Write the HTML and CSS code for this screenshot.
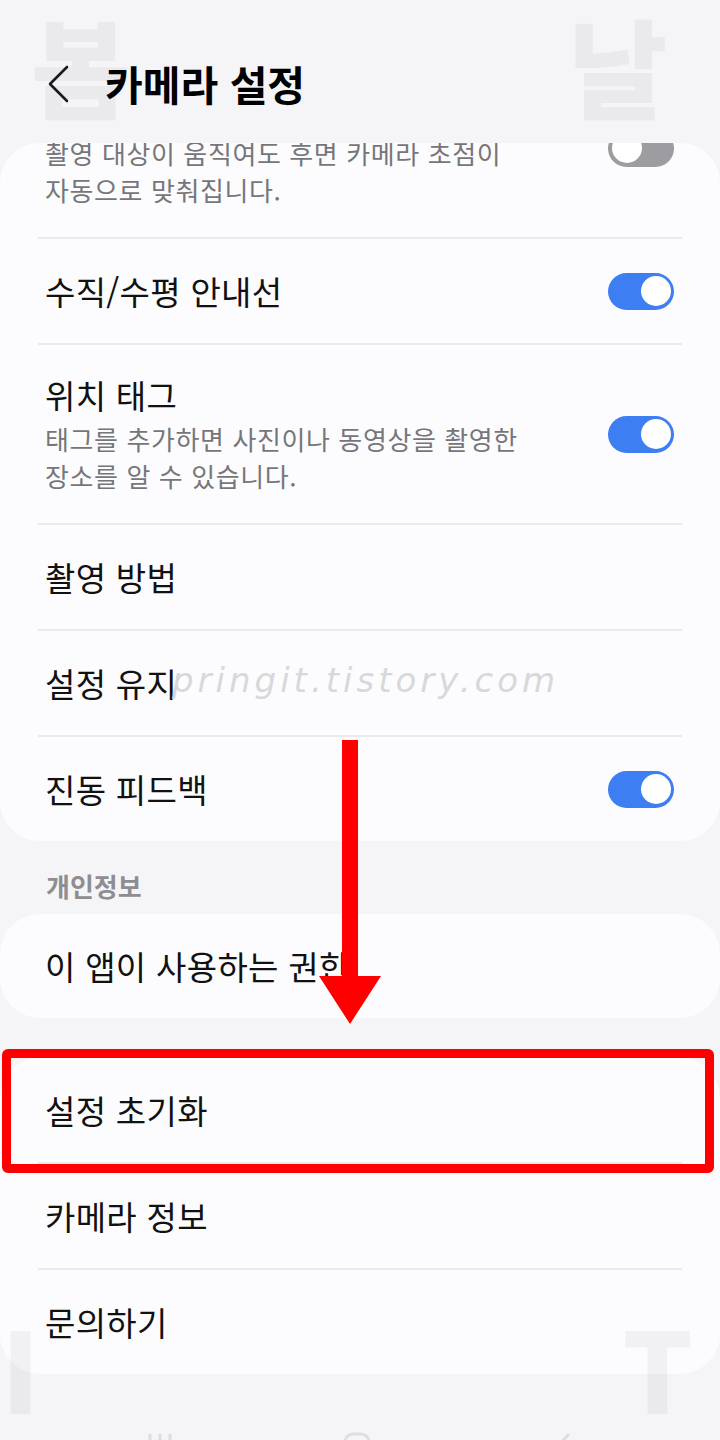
FILE: index.html
```html
<!DOCTYPE html>
<html lang="ko">
<head>
<meta charset="utf-8">
<title>카메라 설정</title>
<link rel="stylesheet" href="styles.css">
</head>
<body>
<div class="screen">
  <header class="header">
    <svg class="back" viewBox="0 0 24 38"><path d="M21 2 L4 19 L21 36"/></svg>
    <h1 class="title">카메라 설정</h1>
  </header>

  <div class="clip">
    <section class="card card-first">
      <div class="row row-2">
        <div class="text">
          <div class="label">추적 AF</div>
          <div class="desc">촬영 대상이 움직여도 후면 카메라 초점이 자동으로 맞춰집니다.</div>
        </div>
        <span class="toggle off"><span class="knob"></span></span>
      </div>
      <div class="divider"></div>
      <div class="row">
        <div class="text"><div class="label">수직/수평 안내선</div></div>
        <span class="toggle"><span class="knob"></span></span>
      </div>
      <div class="divider"></div>
      <div class="row row-2">
        <div class="text">
          <div class="label">위치 태그</div>
          <div class="desc">태그를 추가하면 사진이나 동영상을 촬영한 장소를 알 수 있습니다.</div>
        </div>
        <span class="toggle"><span class="knob"></span></span>
      </div>
      <div class="divider"></div>
      <div class="row">
        <div class="text"><div class="label">촬영 방법</div></div>
      </div>
      <div class="divider"></div>
      <div class="row">
        <div class="text"><div class="label">설정 유지</div></div>
      </div>
      <div class="divider"></div>
      <div class="row">
        <div class="text"><div class="label">진동 피드백</div></div>
        <span class="toggle"><span class="knob"></span></span>
      </div>
    </section>
  </div>

  <div class="section-title">개인정보</div>
  <section class="card">
    <div class="row">
      <div class="text"><div class="label">이 앱이 사용하는 권한</div></div>
    </div>
  </section>

  <section class="card card-gap">
    <div class="row">
      <div class="text"><div class="label">설정 초기화</div></div>
    </div>
    <div class="divider"></div>
    <div class="row">
      <div class="text"><div class="label">카메라 정보</div></div>
    </div>
    <div class="divider"></div>
    <div class="row">
      <div class="text"><div class="label">문의하기</div></div>
    </div>
  </section>

  <nav class="navbar">
    <svg class="nav-icon" viewBox="0 0 30 30"><path d="M5 2 V28 M15 2 V28 M25 2 V28"/></svg>
    <svg class="nav-icon nav-home" viewBox="0 0 30 30"><rect x="3" y="2" width="24" height="24" rx="8"/></svg>
    <svg class="nav-icon nav-back" viewBox="0 0 30 30"><path d="M20 2 L9 14 L20 26"/></svg>
  </nav>

  <div class="watermark">pringit.tistory.com</div>
  <div class="highlight"></div>
  <svg class="arrow" viewBox="0 0 72 290"><rect x="27" y="2" width="16" height="240"/><polygon points="4,238 66,238 35,286"/></svg>

  <div class="wm wm-bom">봄</div>
  <div class="wm wm-nal">날</div>
  <div class="wm wm-i">I</div>
  <div class="wm wm-t">T</div>
</div>
</body>
</html>
```

FILE: styles.css
```css
html, body {
  margin: 0;
  padding: 0;
}

body {
  background: #f5f5f7;
  font-family: "Noto Sans CJK KR", "Noto Sans", sans-serif;
  color: #111;
}

.screen {
  position: relative;
  width: 720px;
  height: 1440px;
  overflow: hidden;
}

/* Header */
.header {
  height: 143px;
  box-sizing: border-box;
  display: flex;
  align-items: center;
  padding: 24px 0 0 46px;
}

.back {
  width: 24px;
  height: 38px;
  fill: none;
  stroke: #1c1c1c;
  stroke-width: 2.6;
  stroke-linecap: round;
  stroke-linejoin: round;
}

.title {
  margin: 0 0 0 35px;
  font-size: 41px;
  font-weight: 700;
  line-height: 1;
  color: #000;
}

/* Cards */
.clip {
  overflow: hidden;
  border-radius: 40px 40px 0 0;
}

.card {
  background: #fcfcfe;
  border-radius: 40px;
}

.card-first {
  margin-top: -84px;
}

.card-gap {
  margin-top: 40px;
}

.row {
  display: flex;
  align-items: center;
  min-height: 104px;
  box-sizing: border-box;
  padding: 0 46px 0 45px;
}

.row-2 {
  padding-top: 29px;
  padding-bottom: 29px;
}

.text {
  flex: 1;
  min-width: 0;
}

.label {
  font-size: 33px;
  line-height: 42px;
  letter-spacing: 0.3px;
  color: #111;
  word-break: keep-all;
}

.desc {
  margin-top: 4px;
  max-width: 500px;
  font-size: 26px;
  line-height: 37px;
  letter-spacing: 0.6px;
  color: #76767a;
  word-break: keep-all;
}

.divider {
  height: 2px;
  margin: 0 38px;
  background: #ebebed;
}

/* Toggle switch */
.toggle {
  flex: none;
  width: 66px;
  height: 37px;
  box-sizing: border-box;
  padding: 3.5px;
  border-radius: 19px;
  background: #3d7ef3;
  display: flex;
  align-items: center;
  justify-content: flex-end;
}

.knob {
  width: 30px;
  height: 30px;
  border-radius: 50%;
  background: #fff;
}

.toggle.off {
  background: #9d9da1;
  justify-content: flex-start;
}

/* Section header */
.section-title {
  padding: 30px 46px 13px;
  font-size: 26px;
  line-height: 30px;
  font-weight: 700;
  color: #8e8e92;
}

/* Navigation bar */
.navbar {
  display: flex;
  margin-top: 58px;
  padding-left: 145px;
  height: 30px;
}

.nav-icon {
  width: 30px;
  height: 30px;
  fill: none;
  stroke: #dedee2;
  stroke-width: 3;
}

.nav-home {
  margin-left: 167px;
}

.nav-back {
  margin-left: 177px;
}

/* Annotation overlays */
.watermark {
  position: absolute;
  left: 172px;
  top: 660px;
  font-family: "DejaVu Sans", sans-serif;
  font-style: italic;
  font-weight: 200;
  font-size: 34px;
  letter-spacing: 4px;
  color: #d8d8da;
}

.highlight {
  position: absolute;
  left: 2px;
  top: 1049px;
  width: 712px;
  height: 124px;
  box-sizing: border-box;
  border: 9px solid #ff0000;
  border-radius: 6px;
}

.arrow {
  position: absolute;
  left: 315px;
  top: 738px;
  width: 72px;
  height: 290px;
  fill: #ff0000;
}

.wm {
  position: absolute;
  font-family: "Noto Sans CJK KR", sans-serif;
  font-weight: 900;
  line-height: 1;
  color: rgba(0, 0, 0, 0.045);
}

.wm-bom {
  left: 31px;
  top: 10px;
  font-size: 108px;
}

.wm-nal {
  left: 568px;
  top: 10px;
  font-size: 108px;
}

.wm-i {
  left: 1px;
  top: 1310px;
  font-size: 111px;
}

.wm-t {
  left: 622px;
  top: 1310px;
  font-size: 111px;
}
```
